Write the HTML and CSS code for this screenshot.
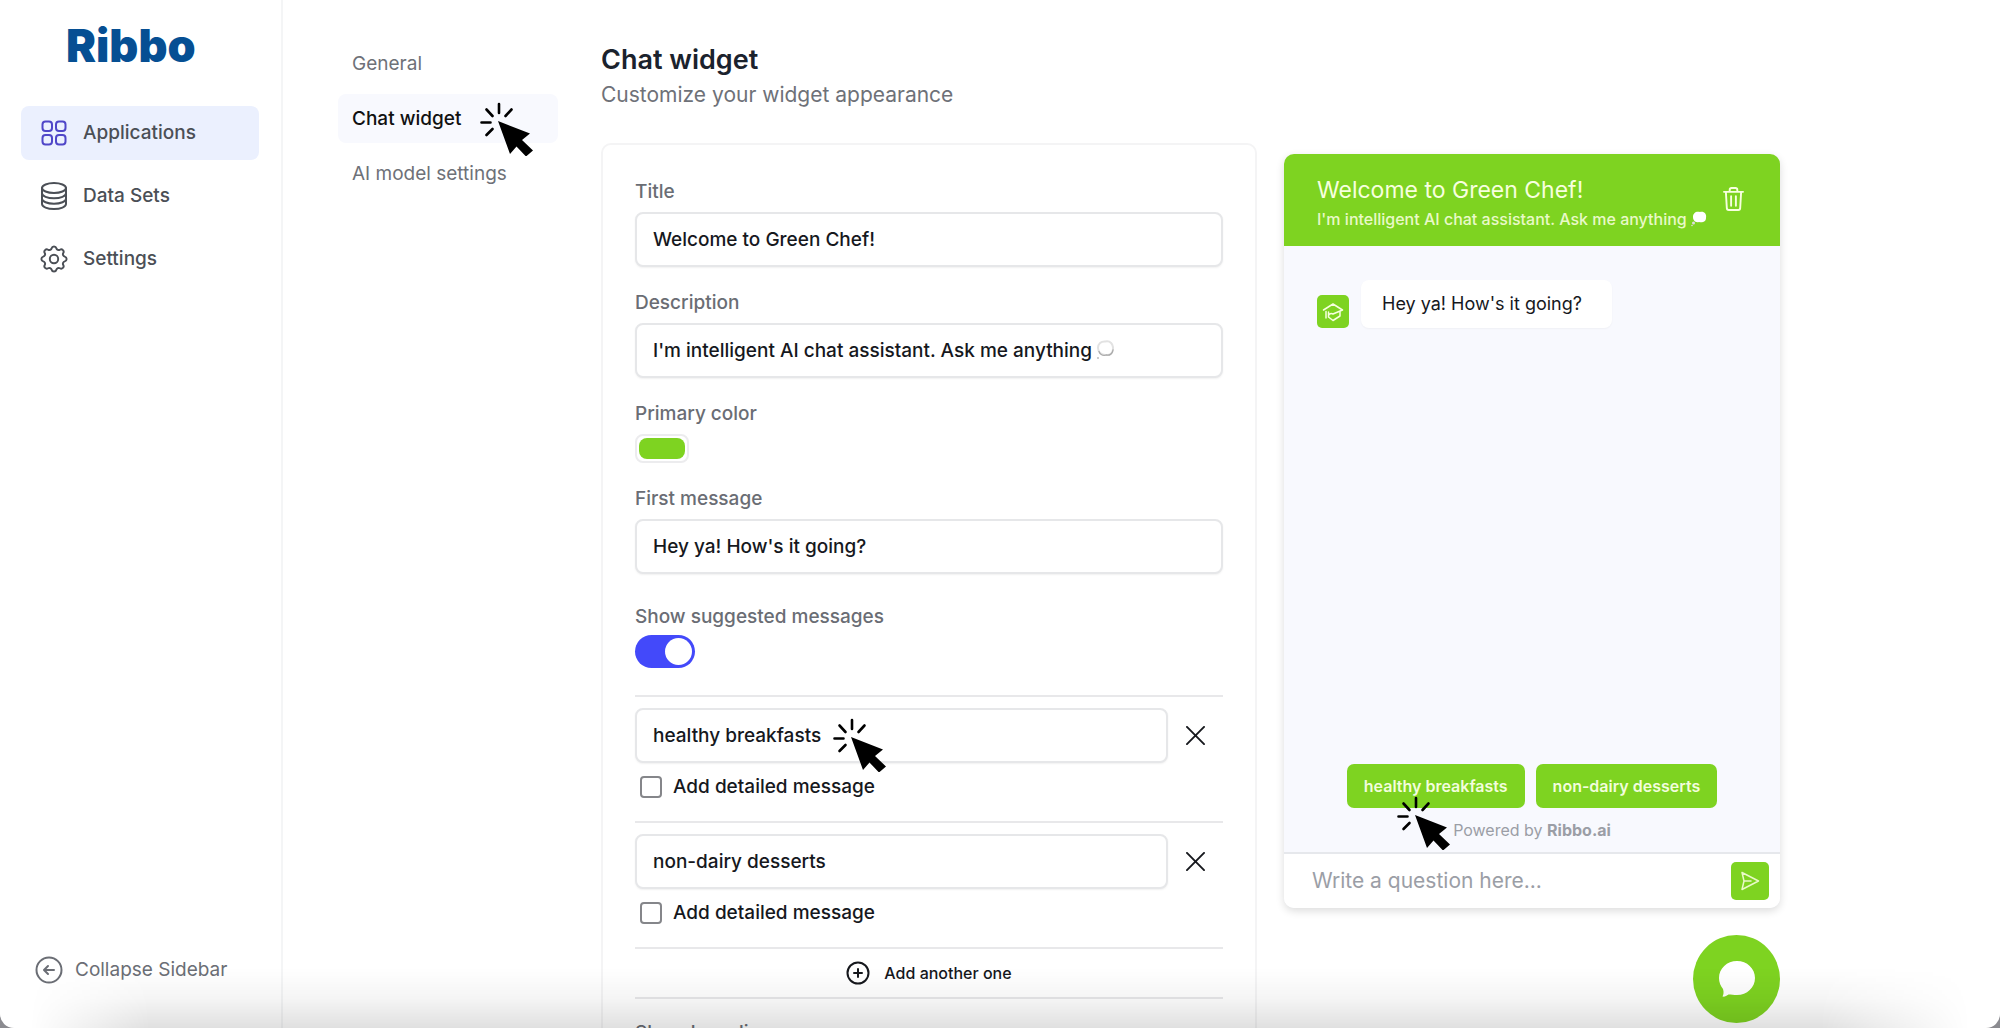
FILE: index.html
```html
<!DOCTYPE html>
<html lang="en">
<head>
<meta charset="utf-8">
<title>Ribbo – Chat widget</title>
<link rel="stylesheet" href="styles.css">
</head>
<body>
<svg class="defs" aria-hidden="true">
  <symbol id="pointer" viewBox="0 0 54 54">
    <g stroke="#000" stroke-width="2.6" stroke-linecap="round"><path d="M19 2v9M6.500 7.500l6 6.500M31.500 7.500l-6 6.500M1.500 20.500h9M6.500 33l6-6"/></g>
    <path d="M18 19l32 12.500-8 6.500 11 10.500-7 6-9.500-10-6.500 7.500z"/>
  </symbol>
</svg>
<div class="app">
  <aside class="sidebar">
    <a class="logo" href="#">Ribbo</a>
    <nav class="nav">
      <a class="nav-link active" href="#">
        <svg viewBox="0 0 28 28"><rect x="2.500" y="2.500" width="9.500" height="9.500" rx="3"/><rect x="16" y="2.500" width="9.500" height="9.500" rx="3"/><rect x="2.500" y="16" width="9.500" height="9.500" rx="3"/><rect x="16" y="16" width="9.500" height="9.500" rx="3"/></svg>
        Applications</a>
      <a class="nav-link" href="#">
        <svg viewBox="0 0 28 28"><ellipse cx="14" cy="6" rx="12" ry="5"/><path d="M2 6v16c0 2.800 5.400 5 12 5s12-2.200 12-5V6M2 11.300c0 2.800 5.400 5 12 5s12-2.200 12-5M2 16.700c0 2.800 5.400 5 12 5s12-2.200 12-5"/></svg>
        Data Sets</a>
      <a class="nav-link" href="#">
        <svg viewBox="2 2 20 20"><g stroke-width="1.400"><path d="M10.325 4.317c.426-1.756 2.924-1.756 3.350 0a1.724 1.724 0 002.573 1.066c1.543-.94 3.310.826 2.370 2.370a1.724 1.724 0 001.065 2.572c1.756.426 1.756 2.924 0 3.350a1.724 1.724 0 00-1.066 2.573c.94 1.543-.826 3.310-2.370 2.370a1.724 1.724 0 00-2.572 1.065c-.426 1.756-2.924 1.756-3.350 0a1.724 1.724 0 00-2.573-1.066c-1.543.94-3.310-.826-2.370-2.370a1.724 1.724 0 00-1.065-2.572c-1.756-.426-1.756-2.924 0-3.350a1.724 1.724 0 001.066-2.573c-.94-1.543.826-3.310 2.370-2.370.996.608 2.296.070 2.572-1.065z"/><circle cx="12" cy="12" r="3"/></g></svg>
        Settings</a>
    </nav>
    <button class="collapse" type="button">
      <svg viewBox="0 0 28 28"><circle cx="14" cy="14" r="12.500"/><path d="M19 14H9.500M13 10l-4 4 4 4"/></svg>
      Collapse Sidebar</button>
  </aside>

  <main class="main">
    <nav class="subnav">
      <a href="#">General</a>
      <a class="current" href="#">Chat widget<svg class="pointer"><use href="#pointer"/></svg></a>
      <a href="#">AI model settings</a>
    </nav>

    <section class="editor">
      <header class="heading">
        <h1>Chat widget</h1>
        <p>Customize your widget appearance</p>
      </header>
      <form class="card">
        <div class="field">
          <label for="title">Title</label>
          <input class="text" id="title" type="text" value="Welcome to Green Chef!">
        </div>
        <div class="field">
          <label for="desc">Description</label>
          <div class="with-emoji">
            <input class="text" id="desc" type="text" value="I'm intelligent AI chat assistant. Ask me anything">
            <svg class="emoji" viewBox="0 0 18 20"><path d="M2 8C2 4 5 1 9.500 1.500 14 .5 17.500 4 17 9c0 4-3 6.500-7 6-4 .5-8-2.500-8-7z" fill="#fff" stroke="#e2e2e2"/><path d="M3 11.500c1 3 4 4.500 7 3.500 4 .8 6.500-1.500 7-5" stroke="#aaa" stroke-width="1.300"/><circle cx="2" cy="18" r="1" fill="#bbb" stroke="none"/></svg>
          </div>
        </div>
        <div class="field">
          <label for="color">Primary color</label>
          <input class="swatch" id="color" type="color" value="#7ed321">
        </div>
        <div class="field">
          <label for="first">First message</label>
          <input class="text" id="first" type="text" value="Hey ya! How's it going?">
        </div>
        <div class="field toggle-field">
          <label for="suggest">Show suggested messages</label>
          <input class="toggle" id="suggest" type="checkbox" role="switch" checked>
        </div>
        <div class="suggestion">
          <div class="row">
            <input class="text" type="text" aria-label="Suggested message 1" value="healthy breakfasts">
            <svg class="pointer"><use href="#pointer"/></svg>
            <button class="remove" type="button" aria-label="Remove"><svg viewBox="0 0 20 20"><path d="M1 1l18 18M19 1L1 19"/></svg></button>
          </div>
          <label class="check"><input type="checkbox">Add detailed message</label>
        </div>
        <div class="suggestion">
          <div class="row">
            <input class="text" type="text" aria-label="Suggested message 2" value="non-dairy desserts">
            <button class="remove" type="button" aria-label="Remove"><svg viewBox="0 0 20 20"><path d="M1 1l18 18M19 1L1 19"/></svg></button>
          </div>
          <label class="check"><input type="checkbox">Add detailed message</label>
        </div>
        <button class="add" type="button"><svg viewBox="0 0 24 24"><circle cx="12" cy="12" r="10.500"/><path d="M12 8v8M8 12h8"/></svg>Add another one</button>
        <div class="field">
          <label for="branding">Show branding</label>
          <input class="toggle" id="branding" type="checkbox" role="switch">
        </div>
      </form>
    </section>

    <section class="preview">
      <div class="chat">
        <header class="chat-head">
          <div>
            <h2>Welcome to Green Chef!</h2>
            <p>I'm intelligent AI chat assistant. Ask me anything
              <svg class="bubble" viewBox="0 0 16 16"><path d="M2 6C2 2 5 0 9 1c4-1 7 2 6 6 0 4-4 5-7 4C4 12 2 9 2 6z" fill="#fff"/><circle cx="2.500" cy="12" r="1.500" fill="#ddd"/><circle cx="1" cy="14.500" r=".8" fill="#ddd"/></svg></p>
          </div>
          <button class="trash" type="button" aria-label="Clear chat"><svg viewBox="0 0 22 26"><path d="M1 5.500h20M7 5V3.500A2 2 0 0 1 9 1.500h4a2 2 0 0 1 2 2V5M3 5.500l1 17a2 2 0 0 0 2 2h10a2 2 0 0 0 2-2l1-17M8.500 10v10M13.500 10v10"/></svg></button>
        </header>
        <div class="chat-body">
          <div class="message">
            <span class="avatar"><svg viewBox="0 0 24 24"><path d="M2.500 10L12 4l9.500 6L12 14c-3-1.500-5 1-4.500 3M5 11.500V18M19 11.500v4.500l-7 4.500-4.500-3.500M7.500 12v5"/></svg></span>
            <p>Hey ya! How's it going?</p>
          </div>
          <div class="suggest">
            <div class="chips">
              <button type="button">healthy breakfasts</button>
              <button type="button">non-dairy desserts</button>
              <svg class="pointer"><use href="#pointer"/></svg>
            </div>
            <p class="powered">Powered by <b>Ribbo.ai</b></p>
          </div>
        </div>
        <footer class="chat-foot">
          <input type="text" aria-label="Question" placeholder="Write a question here...">
          <button type="button" aria-label="Send"><svg viewBox="0 0 20 20"><path d="M2 1.500L18.500 10 2 18.500 4 10zM4 10h7"/></svg></button>
        </footer>
      </div>
      <button class="fab" type="button" aria-label="Open chat"><svg viewBox="0 0 36 36"><path d="M18 0c10 0 18 7.500 18 17s-8 17-18 17c-3 0-6-.5-8.500-.5-2 1.500-4 2.500-6 2 1-2 1.500-4 .5-7.500C1.500 25 0 21 0 17 0 7.500 8 0 18 0z"/></svg></button>
    </section>
  </main>
  <div class="shade"></div>
</div>
</body>
</html>
```
FILE: styles.css
```css
* { box-sizing: border-box; }
body {
  margin: 0;
  background: #8b8b90;
  color: #16181d;
  font-family: Inter, "Liberation Sans", sans-serif;
  font-size: 19px;
  line-height: 24px;
}
h1, h2, p { margin: 0; font-weight: 400; }
a { color: inherit; text-decoration: none; }
button, input { font: inherit; color: inherit; margin: 0; }
button { background: none; border: 0; padding: 0; cursor: pointer; }
svg { fill: none; stroke: currentColor; stroke-width: 2; stroke-linecap: round; stroke-linejoin: round; flex: none; }
.defs { position: absolute; width: 0; height: 0; }
.pointer { position: absolute; width: 54px; height: 54px; stroke: none; fill: #000; pointer-events: none; }

.app {
  position: relative;
  display: flex;
  height: 100vh;
  overflow: hidden;
  background: #fff;
  border-radius: 0 0 14px 14px;
}
.shade {
  position: absolute;
  inset: auto 0 0 0;
  height: 60px;
  background: linear-gradient(rgba(0,0,0,0), rgba(0,0,0,.04) 50%, rgba(0,0,0,.12));
  -webkit-mask-image: linear-gradient(90deg, transparent 30px, #000 150px, #000 calc(100% - 180px), transparent calc(100% - 30px));
  mask-image: linear-gradient(90deg, transparent 30px, #000 150px, #000 calc(100% - 180px), transparent calc(100% - 30px));
  pointer-events: none;
}

.sidebar {
  width: 283px;
  flex: none;
  display: flex;
  flex-direction: column;
  padding: 18px 22px 40px 21px;
  border-right: 2px solid #f4f5f6;
  color: #4b4f56;
}
.logo { padding: 0 45px; font-size: 45px; line-height: 56px; font-weight: 900; color: #064f93; }
.nav { display: flex; flex-direction: column; gap: 9px; margin-top: 32px; }
.nav-link { display: flex; align-items: center; gap: 15px; height: 54px; padding: 0 19px; border-radius: 8px; font-weight: 500; }
.nav-link svg { width: 28px; height: 28px; }
.nav-link.active { background: #ebf0fe; }
.nav-link.active svg { color: #4f46c8; }
.collapse { display: flex; align-items: center; gap: 12px; margin-top: auto; padding-left: 14px; height: 36px; color: #6b6e75; }
.collapse svg { width: 28px; height: 28px; }

.main {
  flex: 1;
  min-width: 0;
  display: grid;
  grid-template-columns: 220px minmax(0, 1fr) 496px;
  padding: 39px 220px 0 55px;
}
.subnav { display: flex; flex-direction: column; gap: 6px; }
.subnav a { position: relative; display: flex; align-items: center; height: 49px; padding: 0 14px; border-radius: 8px; color: #6e7178; }
.subnav .current { background: #f8f9fe; color: #111; font-weight: 500; }
.subnav .pointer { left: 142px; top: 8px; }

.editor { margin: 0 27px 0 43px; }
.heading { margin-bottom: 33px; }
.heading h1 { font-size: 27px; line-height: 41px; font-weight: 600; color: #1b222d; }
.heading p { font-size: 21px; line-height: 30px; color: #6e7178; }
.card { display: flex; flex-direction: column; padding: 35px 32px 32px; border: 2px solid #f4f4f5; border-radius: 10px; }
.field { display: flex; flex-direction: column; align-items: flex-start; gap: 8px; margin-bottom: 24px; }
.field label { color: #6a6d74; font-weight: 500; }
.text { width: 100%; height: 55px; padding: 0 16px; border: 2px solid #e6e7e9; border-radius: 8px; background: #fff; box-shadow: 0 1px 2px rgba(0,0,0,.06); font-weight: 500; outline: 0; }
.with-emoji { position: relative; width: 100%; }
.emoji { position: absolute; left: 461px; top: 17px; width: 18px; height: 20px; }
.swatch { width: 54px; height: 29px; padding: 2px; border: 2px solid #ececee; border-radius: 8px; background: #fff; appearance: none; }
.swatch::-webkit-color-swatch-wrapper { padding: 0; }
.swatch::-webkit-color-swatch { border: 0; border-radius: 8px; }
.toggle { appearance: none; display: flex; width: 60px; height: 33px; padding: 3px; border-radius: 17px; background: #d5d6da; }
.toggle::before { content: ""; width: 27px; height: 27px; border-radius: 50%; background: #fff; }
.toggle:checked { justify-content: flex-end; background: #4349fa; }
.toggle-field { gap: 6px; margin: 7px 0 27px; }

.suggestion { border-top: 2px solid #e8e8ea; padding: 11px 0 22px; }
.row { position: relative; display: flex; }
.row .pointer { left: 198px; top: 10px; }
.remove { display: grid; place-items: center; flex: none; width: 55px; }
.remove svg { width: 19px; height: 19px; }
.check { display: flex; align-items: center; gap: 11px; margin-top: 12px; padding-left: 5px; font-weight: 500; }
.check input { appearance: none; width: 22px; height: 22px; border: 2px solid #85868a; border-radius: 4px; background: #fff; }
.add { display: flex; align-items: center; justify-content: center; gap: 14px; height: 52px; margin-bottom: 22px; border: solid #e8e8ea; border-width: 2px 0; font-size: 16px; font-weight: 500; }
.add svg { width: 24px; height: 24px; }

.preview { display: flex; flex-direction: column; align-items: flex-end; gap: 27px; padding-top: 115px; }
.chat { display: flex; flex-direction: column; width: 100%; height: 754px; overflow: hidden; border-radius: 10px; background: #f8f9fe; box-shadow: 0 3px 8px rgba(0,0,0,.14); }
.chat-head { display: flex; align-items: center; justify-content: space-between; height: 92px; padding: 4px 36px 0 33px; background: #7ed321; color: #f7ffdf; }
.chat-head h2 { font-size: 23px; line-height: 34px; }
.chat-head p { font-size: 16px; line-height: 24px; font-weight: 500; color: #e9f9c8; white-space: nowrap; }
.bubble { width: 16px; height: 16px; stroke: none; vertical-align: -2px; }
.trash svg { width: 21px; height: 26px; }
.chat-body { flex: 1; display: flex; flex-direction: column; justify-content: space-between; padding: 34px 33px 10px; }
.message { display: flex; align-items: flex-end; gap: 12px; }
.avatar { display: grid; place-items: center; width: 32px; height: 33px; border-radius: 5px; background: #7ed321; color: #f7ffdf; }
.avatar svg { width: 24px; height: 24px; stroke-width: 1.500; }
.message p { padding: 12px 30px 12px 21px; border-radius: 8px; background: #fff; font-size: 18px; box-shadow: 0 1px 2px rgba(0,0,0,.04); }
.suggest { display: flex; flex-direction: column; align-items: center; gap: 10px; }
.chips { position: relative; display: flex; gap: 11px; }
.chips button { height: 44px; padding: 0 17px; border-radius: 7px; background: #7ed321; color: #f2fddc; font-size: 16px; font-weight: 600; white-space: nowrap; }
.chips .pointer { left: 50px; top: 32px; }
.powered { font-size: 16px; color: #9b9ea6; }
.chat-foot { display: flex; align-items: center; height: 56px; padding: 0 11px 0 28px; border-top: 2px solid #e6e8ec; background: #fff; }
.chat-foot input { flex: 1; min-width: 0; border: 0; padding: 0; outline: 0; font-size: 21px; background: none; }
.chat-foot input::placeholder { color: #9b9ea6; }
.chat-foot button { display: grid; place-items: center; width: 38px; height: 38px; border-radius: 5px; background: #7ed321; color: #e9f9c8; }
.chat-foot button svg { width: 20px; height: 20px; stroke-width: 1.500; }
.fab { display: grid; place-items: center; width: 87px; height: 88px; border-radius: 50%; background: #7ed321; }
.fab svg { width: 36px; height: 36px; fill: #fff; stroke: none; }
```
